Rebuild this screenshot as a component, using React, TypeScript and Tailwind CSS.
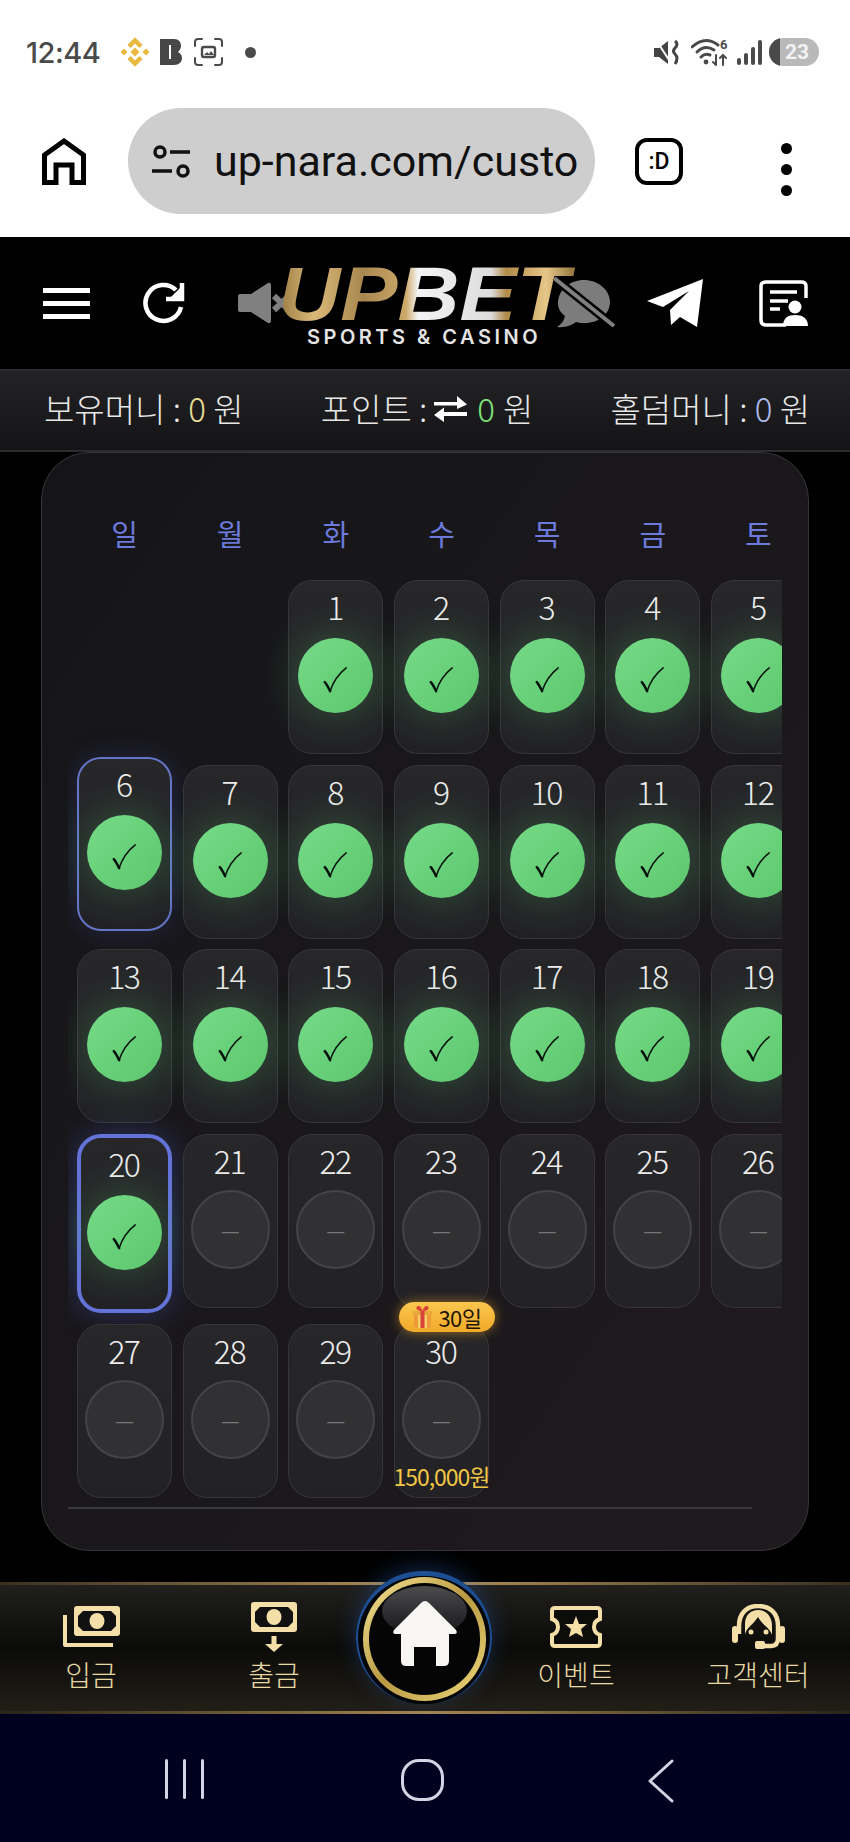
import React from 'react';

const weekDays = ['일', '월', '화', '수', '목', '금', '토'];
const lastChecked = 20;

function Check() {
  return (
    <svg width="25" height="27" viewBox="0 0 28 30" className="mt-[8px]">
      <path d="M2 18 C4 20 6 24 8 28" fill="none" stroke="#04140a" strokeWidth="2.8" strokeLinecap="round" />
      <path d="M8 28 C11 19 17 9 26 2" fill="none" stroke="#04140a" strokeWidth="1.7" strokeLinecap="round" />
    </svg>
  );
}

function Gift() {
  return (
    <svg width="21" height="24" viewBox="0 0 21 24">
      <rect x="2" y="8" width="17" height="15" rx="1.500" fill="#f6cf6a" />
      <rect x="1" y="6" width="19" height="4" rx="1" fill="#e8a93c" />
      <rect x="8.500" y="6" width="4" height="17" fill="#d9443a" />
      <path d="M2 10 H6 V23 H4 Q2 23 2 21 Z M15 10 H19 V21 Q19 23 17 23 H15 Z" fill="#ee9a3a" />
      <path d="M10.500 6 C6 6 3 4 5 1.500 C7 0 9.500 2 10.500 6 C11.500 2 14 0 16 1.500 C18 4 15 6 10.500 6 Z" fill="#d9443a" />
    </svg>
  );
}

function DayCell({ day }: { day: number }) {
  const done = day <= lastChecked;
  const isFirst = day === 1;
  const isSix = day === 6;
  const isToday = day === 20;
  const isBonus = day === 30;

  let cellClass = 'h-[174px] border border-[#363639] pt-[7px]';
  if (isSix) cellClass = 'h-[174px] border-2 border-[#6674c8] pt-[6px] -translate-y-2 shadow-[0_0_28px_rgba(80,100,220,0.22)]';
  if (isToday) cellClass = 'h-[179px] border-[4px] border-[#6473d9] pt-[7px] shadow-[0_0_30px_rgba(80,100,220,0.35)]';

  return (
    <div className={`relative flex flex-col items-center rounded-[24px] bg-gradient-to-b from-[#272629] to-[#222125] ${cellClass} ${isFirst ? 'col-start-3' : ''}`}>
      {isBonus && (
        <div className="absolute top-[-23px] left-[4px] flex h-[30px] w-[96px] items-center justify-center gap-[5px] rounded-full bg-gradient-to-b from-[#fbc64e] to-[#f1aa27] shadow-[0_0_12px_rgba(245,170,40,0.55)]">
          <Gift />
          <span className="text-[22px] leading-none tracking-[-0.5px] text-[#211506]">30일</span>
        </div>
      )}
      <div className="h-[36px] pr-[1.5px] text-[32px] leading-[36px] font-light tracking-[-1.5px] text-[#ececec]">{day}</div>
      <div className="mt-[12px] flex h-[79px] items-center justify-center">
        {done ? (
          <div className="flex h-[75px] w-[75px] items-center justify-center rounded-full bg-gradient-to-br from-[#76da88] to-[#5cc76d] shadow-[0_0_46px_rgba(90,210,120,0.32)]">
            <Check />
          </div>
        ) : (
          <div className="flex h-[79px] w-[79px] items-center justify-center rounded-full border-2 border-[#444447] bg-[#313134]">
            <span className="mt-[5px] font-['Liberation_Sans',sans-serif] text-[17px] leading-none text-[#77777a]">—</span>
          </div>
        )}
      </div>
      {isBonus && (
        <div className="absolute bottom-[7px] left-[-5px] w-[103px] text-center text-[23px] leading-[28px] tracking-[-1px] whitespace-nowrap text-[#f2c744]">150,000원</div>
      )}
    </div>
  );
}

function StatusBar() {
  return (
    <div className="flex h-[104px] items-center justify-between pr-[31px] pl-[26px]">
      <div className="flex items-center text-[#4a4a4a]">
        <span className="w-[94px] font-['Inter',sans-serif] text-[29px] leading-none font-medium tracking-[-0.5px]">12:44</span>
        <svg width="30" height="30" viewBox="0 0 30 30" fill="none" stroke="#e8b93e">
          <path d="M9 9.500 L15 3.500 L21 9.500 M9 20.500 L15 26.500 L21 20.500" strokeWidth="4.500" />
          <path d="M4 11.500 L7.500 15 L4 18.500 L0.500 15 Z M26 11.500 L29.500 15 L26 18.500 L22.500 15 Z M15 10.500 L19.500 15 L15 19.500 L10.500 15 Z" fill="#e8b93e" stroke="none" />
        </svg>
        <svg width="22" height="26" viewBox="0 0 22 26" className="ml-[10px]">
          <path d="M0 0 H14 C19 0 21 3 21 7 C21 10 19 12 18 13 C20 14 22 16 22 19 C22 23 19 26 14 26 H0 Z M9 6 V20 H11 V6 Z" fill="#474747" fillRule="evenodd" />
        </svg>
        <svg width="29" height="28" viewBox="0 0 29 28" className="ml-[12px]" fill="none" stroke="#4a4a4a" strokeWidth="2" strokeLinecap="round">
          <path d="M1 8 V4 Q1 1 4 1 H8 M21 1 H25 Q28 1 28 4 V8 M28 20 V24 Q28 27 25 27 H21 M8 27 H4 Q1 27 1 24 V20" />
          <rect x="8" y="9" width="13" height="10" rx="2" strokeWidth="2.4" />
          <path d="M10 17 L13 14 L15 16 L17 13 L20 17 Z" fill="#4a4a4a" stroke="none" />
        </svg>
        <div className="ml-[22px] h-[11px] w-[11px] rounded-full bg-[#4a4a4a]" />
      </div>
      <div className="flex items-center">
        <svg width="28" height="27" viewBox="0 0 28 27">
          <path d="M0 9 H5 L14 2 V25 L5 18 H0 Z" fill="#444" />
          <path d="M2 1 L17 24" stroke="#fff" strokeWidth="2" />
          <path d="M21 2 Q25 5 21 9 Q18 12 21 15 Q25 19 21 25" fill="none" stroke="#444" strokeWidth="3" />
        </svg>
        <svg width="38" height="30" viewBox="0 0 38 30" className="ml-[9px]" fill="none" stroke="#4a4a4a" strokeLinecap="round">
          <path d="M1 10 Q14 -2 27 8" strokeWidth="3" />
          <path d="M6 15 Q14 7 23 13" strokeWidth="3" />
          <path d="M10 20 Q14 16 19 18" strokeWidth="3" />
          <circle cx="15" cy="25" r="2.4" fill="#4a4a4a" stroke="none" />
          <path d="M25 18 V28 M22 25 L25 28 M32 28 V18 M29 21 L32 18 L35 21" strokeWidth="2" />
          <text x="29" y="12" fontSize="13" fontFamily="Roboto" fontWeight="700" fill="#4a4a4a" stroke="none">6</text>
        </svg>
        <svg width="26" height="25" viewBox="0 0 26 25" className="ml-[8px]" fill="#4a4a4a">
          <rect x="0" y="18" width="4" height="7" rx="2" />
          <rect x="7" y="13" width="4" height="12" rx="2" />
          <rect x="14" y="7" width="4" height="18" rx="2" />
          <rect x="21" y="0" width="4" height="25" rx="2" />
        </svg>
        <div className="relative ml-[6px] flex h-[28px] w-[50px] items-center justify-center overflow-hidden rounded-full bg-[#b9b9b9]">
          <div className="absolute top-0 bottom-0 left-0 w-[11px] bg-[#4a4a4a]" />
          <span className="relative pl-[6px] font-['Roboto',sans-serif] text-[21px] leading-none font-bold text-[#f2f2f2]">23</span>
        </div>
      </div>
    </div>
  );
}

function BrowserBar() {
  return (
    <div className="flex h-[133px] items-start pt-[4px] pl-[42px]">
      <svg width="44" height="47" viewBox="0 0 44 47" className="mt-[30px]" fill="none" stroke="#000" strokeWidth="5">
        <path d="M2.500 44.500 V17 L22 3 L41.500 17 V44.500 H30 V27 H14 V44.500 Z" />
      </svg>
      <div className="ml-[42px] flex h-[106px] w-[467px] items-center overflow-hidden rounded-full bg-[#cfcecf] pl-[24px]">
        <svg width="38" height="33" viewBox="0 0 38 33" fill="none" stroke="#111" strokeWidth="3.500">
          <circle cx="8" cy="7" r="5" />
          <path d="M18 7 H38 M0 26 H20" />
          <circle cx="31" cy="26" r="5" />
        </svg>
        <span className="ml-[24px] font-['Roboto',sans-serif] text-[43px] leading-none whitespace-nowrap text-[#111]">up-nara.com/custo</span>
      </div>
      <div className="mt-[30px] ml-[40px] flex h-[47px] w-[48px] items-center justify-center rounded-[12px] border-[4.5px] border-black font-['Roboto',sans-serif] text-[23px] leading-none font-medium text-black">:D</div>
      <div className="mt-[35px] ml-[98px] flex flex-col gap-[10px]">
        <div className="h-[11px] w-[11px] rounded-full bg-black" />
        <div className="h-[11px] w-[11px] rounded-full bg-black" />
        <div className="h-[11px] w-[11px] rounded-full bg-black" />
      </div>
    </div>
  );
}

function SiteHeader() {
  return (
    <div className="relative flex h-[132px] items-center bg-black pl-[43px]">
      <div className="flex h-[31px] w-[47px] flex-col justify-between">
        <div className="h-[5px] bg-white" />
        <div className="h-[5px] bg-white" />
        <div className="h-[5px] bg-white" />
      </div>
      <svg width="42" height="42" viewBox="0 0 42 42" className="ml-[53px]" fill="none" stroke="#fff" strokeWidth="4.500">
        <path d="M33 8 A18 18 0 1 0 38 25" />
        <path d="M39 1 V17 H23" />
        <path d="M39 4 V15 H28 Z" fill="#fff" stroke="none" />
      </svg>
      <svg width="55" height="42" viewBox="0 0 55 42" className="ml-[53px]">
        <path d="M0 14 Q0 12 2 12 H13 L30 1 Q33 0 33 4 V38 Q33 42 30 41 L13 30 H2 Q0 30 0 28 Z" fill="#808080" />
        <path d="M36 14 L51 28 M51 14 L36 28" stroke="#808080" strokeWidth="6" />
      </svg>
      <svg width="62" height="52" viewBox="0 0 62 52" className="ml-[261px]">
        <path d="M4 27 C4 12 16 3 30 3 C43 3 56 12 56 25 C56 37 45 46 31 46 C28 46 25 46 22 45 C18 48 12 51 3 50 C8 47 10 43 11 39 C7 36 4 32 4 27 Z" fill="#7c7c7c" />
        <path d="M0 1 L60 49" stroke="#000" strokeWidth="9" />
        <path d="M0 1 L60 49" stroke="#808080" strokeWidth="4" />
      </svg>
      <svg width="57" height="49" viewBox="0 0 57 49" className="ml-[31px]">
        <path d="M56 0 L50 48 L33 38 L24 46 L23 31 L42 12 L16 28 L0 22 Z" fill="#fff" />
      </svg>
      <svg width="50" height="47" viewBox="0 0 50 47" className="ml-[55px]" fill="none">
        <path d="M27 45 H7 Q2 45 2 40 V6 Q2 2 7 2 H42 Q47 2 47 6 V18" stroke="#fff" strokeWidth="3.500" />
        <path d="M11 12 H38 M11 21 H29 M11 29 H21" stroke="#fff" strokeWidth="3.500" />
        <circle cx="36" cy="27" r="6.500" fill="#fff" />
        <path d="M24 46 C24 38 29 35 36 35 C43 35 49 38 49 46 Z" fill="#fff" />
      </svg>
      <div className="absolute top-[27px] left-[274px] flex w-[300px] flex-col items-center">
        <div className="scale-x-[1.13] bg-[linear-gradient(90deg,#8f6f38_0%,#d9b878_14%,#a98850_30%,#cba868_44%,#f4f4f4_48%,#dcdcdc_72%,#b18a48_77%,#e6c788_90%,#8f6f38_100%)] bg-clip-text px-[6px] font-['Liberation_Sans',sans-serif] text-[76px] leading-[60px] font-bold text-transparent italic">UPBET</div>
        <div className="mt-[3px] font-['Inter',sans-serif] text-[20px] leading-[20px] font-semibold tracking-[3.500px] whitespace-nowrap text-[#e4e4e4]">SPORTS &amp; CASINO</div>
      </div>
    </div>
  );
}

function MoneyBar() {
  return (
    <div className="flex h-[83px] items-center justify-between border-y-2 border-[#2c2c2e] bg-gradient-to-b from-[#232325] to-[#141416] pr-[40px] pb-[4px] pl-[44px] text-[33px] leading-none font-light whitespace-nowrap text-[#e8e8e8]">
      <div>보유머니 : <span className="text-[#e8dc94]">0</span> 원</div>
      <div className="flex items-center">
        <span>포인트 :</span>
        <svg width="33" height="28" viewBox="0 0 33 28" className="ml-[7px]" fill="#fff">
          <path d="M0 7 H23 V1 L33 9.500 L23 14 V10.500 H0 Z" />
          <path d="M33 17 H10 V12.500 L0 20 L10 27 V21 H33 Z" />
        </svg>
        <span className="ml-[10px] text-[#7ee07c]">0</span>
        <span className="ml-[8px]">원</span>
      </div>
      <div>홀덤머니 : <span className="text-[#a9b8e8]">0</span> 원</div>
    </div>
  );
}

function Calendar() {
  const days = Array.from({ length: 30 }, (_, i) => i + 1);
  return (
    <div className="ml-[41px] w-[768px] rounded-[48px] border border-[#36363a] bg-gradient-to-br from-[#151518] to-[#1f1a1e] pt-[60px] pb-[41px] pl-[26px]">
      <div className="w-[714px] overflow-hidden pb-[9px] pl-[9px]">
        <div className="mb-[27px] grid h-[40px] w-max grid-cols-[repeat(7,95px)] gap-x-[10.67px]">
          {weekDays.map((d) => (
            <div key={d} className="text-center text-[29px] leading-[40px] text-[#6b7adb]">{d}</div>
          ))}
        </div>
        <div className="grid w-max grid-cols-[repeat(7,95px)] items-start gap-[10.67px]">
          {days.map((day) => (
            <DayCell key={day} day={day} />
          ))}
        </div>
      </div>
      <div className="h-[2px] w-[684px] bg-[#3a393d]" />
    </div>
  );
}

function NavItem({ label, children }: { label: string; children: React.ReactNode }) {
  return (
    <div className="flex flex-col items-center pt-[20px]">
      <div className="flex h-[50px] items-center justify-center">{children}</div>
      <div className="mt-[4px] text-[28px] leading-[36px] font-light whitespace-nowrap text-[#e8d8a4]">{label}</div>
    </div>
  );
}

function BottomNav() {
  const cream = '#f5dfa8';
  return (
    <div className="relative h-[132px] bg-gradient-to-b from-[#22211e] via-[#0b0b09] to-[#231f18]">
      <div className="absolute top-0 right-0 left-0 h-[3px] bg-gradient-to-r from-[#3a3020] via-[#b8955a] to-[#3a3020]" />
      <div className="absolute right-0 bottom-0 left-0 h-[3px] bg-gradient-to-r from-[#2a2418] via-[#a88850] to-[#2a2418]" />
      <div className="grid h-full grid-cols-[182px_184px_120px_180px_184px]">
        <NavItem label="입금">
          <svg width="57" height="42" viewBox="0 0 57 42">
            <path d="M2 9 V39 H50" fill="none" stroke={cream} strokeWidth="4" strokeLinejoin="round" />
            <path d="M14 0 H54 Q57 0 57 3 V27 Q57 30 54 30 H14 Q11 30 11 27 V3 Q11 0 14 0 Z" fill={cream} />
            <path d="M20 5 H48 L53 10 V20 L48 25 H20 L15 20 V10 Z" fill="#111" />
            <ellipse cx="34" cy="15" rx="7.500" ry="8" fill={cream} />
          </svg>
        </NavItem>
        <NavItem label="출금">
          <svg width="46" height="50" viewBox="0 0 46 50">
            <path d="M3 0 H43 Q46 0 46 3 V27 Q46 30 43 30 H3 Q0 30 0 27 V3 Q0 0 3 0 Z" fill={cream} />
            <path d="M9 5 H37 L42 10 V20 L37 25 H9 L4 20 V10 Z" fill="#111" />
            <ellipse cx="23" cy="15" rx="7.500" ry="8" fill={cream} />
            <path d="M20.500 34 H25.500 V42 H32 L23 50 L14 42 H20.500 Z" fill={cream} />
          </svg>
        </NavItem>
        <div />
        <NavItem label="이벤트">
          <svg width="52" height="42" viewBox="0 0 52 42">
            <path d="M5 2 H47 Q50 2 50 5 V13 Q44 15 44 21 Q44 27 50 29 V37 Q50 40 47 40 H5 Q2 40 2 37 V29 Q8 27 8 21 Q8 15 2 13 V5 Q2 2 5 2 Z" fill="#0c0c0a" stroke={cream} strokeWidth="4" />
            <path d="M26 10 L29 18 L37 18 L31 23 L33 31 L26 27 L19 31 L21 23 L15 18 L23 18 Z" fill={cream} />
          </svg>
        </NavItem>
        <NavItem label="고객센터">
          <svg width="55" height="46" viewBox="0 0 55 46" fill="none">
            <path d="M8 30 V22 C8 9 16 2 27 2 C39 2 47 9 47 22 V34 Q47 42 40 42 H26" stroke={cream} strokeWidth="4.500" />
            <path d="M14 31 C15 24 21 22 27 13 C32 22 39 24 41 31 L41 20 C40 11 34 6 27 6 C20 6 14 11 14 20 Z" fill={cream} />
            <rect x="1" y="22" width="6" height="17" rx="3" fill={cream} />
            <rect x="48" y="22" width="6" height="17" rx="3" fill={cream} />
            <rect x="24" y="37" width="10" height="8" rx="2" fill={cream} />
            <circle cx="20" cy="28" r="2.500" fill={cream} />
            <circle cx="35" cy="28" r="2.500" fill={cream} />
          </svg>
        </NavItem>
      </div>
      <div className="absolute top-[-11px] left-[356px] h-[133px] w-[136px] rounded-full bg-[#040506] shadow-[0_-4px_22px_rgba(40,90,170,0.4)]">
        <div className="absolute inset-0 rounded-full border-t-[5px] border-r-[2px] border-b-0 border-l-[2px] border-[#1f4f93]" />
        <div className="absolute top-[6px] left-[7px] h-[124px] w-[123px] rounded-full bg-gradient-to-br from-[#f7e694] via-[#b99a42] to-[#f0da7c] p-[6px]">
          <div className="relative h-full w-full overflow-hidden rounded-full bg-[#050505]">
            <div className="absolute top-[3px] left-[13px] h-[50px] w-[85px] rounded-[50%] bg-gradient-to-b from-[#4c4c4f] to-[#161618]" />
          </div>
        </div>
        <svg width="66" height="66" viewBox="0 0 66 66" className="absolute top-[29px] left-[36px]">
          <path d="M33 1 Q35 1 37 3 L64 30 Q66 33 63 34 L57 34 V61 Q57 66 52 66 H44 V47 H22 V66 H14 Q9 66 9 61 V34 L3 34 Q0 33 2 30 L29 3 Q31 1 33 1 Z" fill="#f8f6f2" />
        </svg>
      </div>
    </div>
  );
}

function AndroidNav() {
  return (
    <div className="flex h-[128px] items-start bg-[#00001f] pt-[45px] pl-[165px]">
      <div className="flex h-[40px] w-[39px] justify-between">
        <div className="h-full w-[3px] rounded-full bg-[#d4d4e4]" />
        <div className="h-full w-[3px] rounded-full bg-[#d4d4e4]" />
        <div className="h-full w-[3px] rounded-full bg-[#d4d4e4]" />
      </div>
      <div className="ml-[197px] h-[42px] w-[43px] rounded-[18px] border-[3px] border-[#d4d4e4]" />
      <svg width="28" height="44" viewBox="0 0 28 44" className="ml-[203px]" fill="none" stroke="#d4d4e4" strokeWidth="3" strokeLinecap="round" strokeLinejoin="round">
        <path d="M25 2 L3 22 L25 42" />
      </svg>
    </div>
  );
}

export default function App() {
  return (
    <div className="flex h-[1842px] w-[850px] flex-col overflow-hidden bg-white font-['Noto_Sans_CJK_KR',sans-serif]">
      <StatusBar />
      <BrowserBar />
      <SiteHeader />
      <MoneyBar />
      <div className="h-[1130px] bg-black">
        <Calendar />
      </div>
      <BottomNav />
      <AndroidNav />
    </div>
  );
}
